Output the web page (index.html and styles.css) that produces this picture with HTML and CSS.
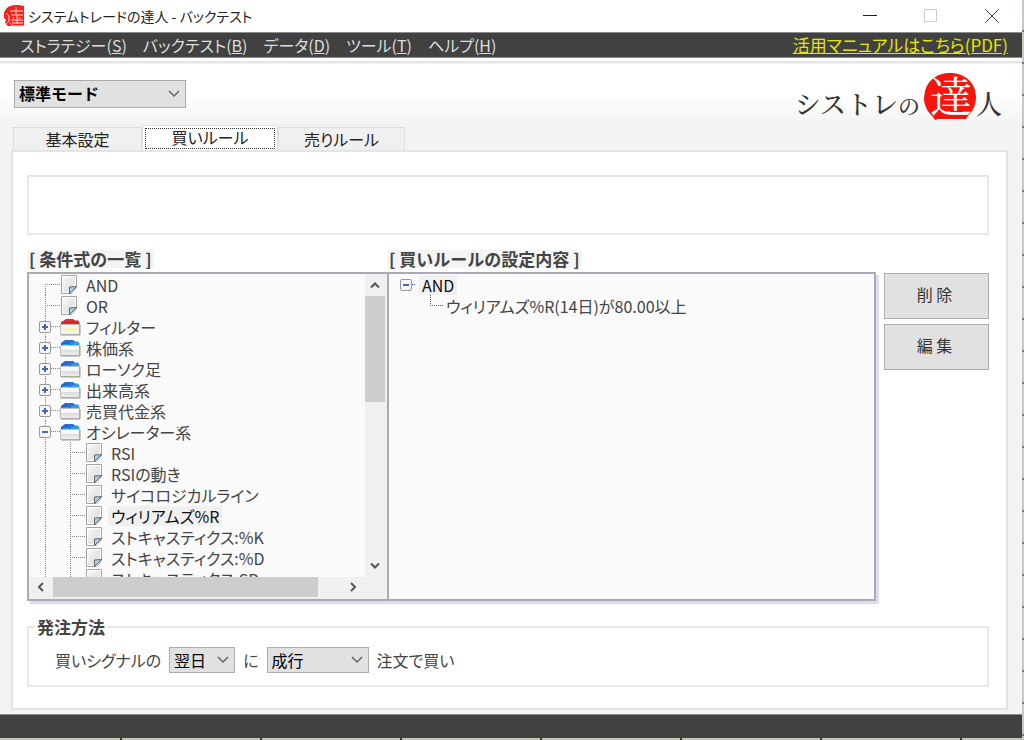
FILE: index.html
```html
<!DOCTYPE html>
<html lang="ja">
<head>
<meta charset="utf-8">
<title>システムトレードの達人 - バックテスト</title>
<link rel="stylesheet" href="styles.css">
</head>
<body>
<svg class="sprites" aria-hidden="true">
  <defs>
    <linearGradient id="paper" x1="0" y1="0" x2="1" y2="1"><stop offset="0" stop-color="#f8f8f8"/><stop offset=".6" stop-color="#e4e4e4"/><stop offset="1" stop-color="#fafafa"/></linearGradient>
    <linearGradient id="blue" x1="0" y1="0" x2="1" y2="0"><stop offset="0" stop-color="#1f63cf"/><stop offset=".65" stop-color="#2c74da"/><stop offset="1" stop-color="#45b4d4"/></linearGradient>
    <linearGradient id="front" x1="0" y1="0" x2="0" y2="1"><stop offset="0" stop-color="#fdfdfd"/><stop offset=".45" stop-color="#f4f4f4"/><stop offset=".5" stop-color="#dedede"/><stop offset="1" stop-color="#efefef"/></linearGradient>
  </defs>
  <symbol id="file" viewBox="0 0 21 21">
    <path d="M1.500 1.500h15v12l-5 6h-10z" fill="#fff" stroke="#a4a4a4"/>
    <path d="M3 3h12v10l-4 5H3z" fill="url(#paper)"/>
    <path d="M16.500 12.500l-7 7v-6.500z" fill="#a9d0f0" stroke="#666"/>
  </symbol>
  <symbol id="folder" viewBox="0 0 21 21">
    <path d="M1 9V6l2-1.500L5 3h8l2 1.500h3L19.500 6v3z" fill="url(#blue)"/>
    <path d="M3 7h6v1H3zM11 6h8v2h-8z" fill="#2fa3cf"/>
    <path d="M.5 8.500h19v10h-19z" fill="url(#front)" stroke="#bdbdbd"/>
    <path d="M1 19h19V9" fill="none" stroke="#999"/>
  </symbol>
  <symbol id="folder-red" viewBox="0 0 21 21">
    <path d="M1 9V6l3-1.500L6 3h7l2 1.500h3L19.500 6v3z" fill="#d42a28"/>
    <path d="M.5 8.500h19v10h-19z" fill="#f3f3f3" stroke="#bdbdbd"/>
    <path d="M3 12h14v2.500H3z" fill="#f6f2a8"/>
    <path d="M1 19h19V9" fill="none" stroke="#999"/>
  </symbol>
</svg>

<div class="window">
  <header class="titlebar">
    <svg class="app-icon" viewBox="0 0 20 22" aria-hidden="true">
      <path d="M5 1.500Q12-1 20 1v20H4l-3-3 1-3-2-2V8q1-4 5-6.500z" fill="#f5211c"/>
      <path d="M6 6h13M12 2v7M7 10h12M9 12l1 2M16 12l-1 2M7 15h12M8 18h11M13 10v9M2 8l3 3v5l-3 3M5 17l4 4h11" fill="none" stroke="#ffdcd8" stroke-width="1"/>
    </svg>
    <h1 class="title">システムトレードの達人 - バックテスト</h1>
    <div class="window-buttons">
      <button aria-label="最小化"><svg viewBox="0 0 16 16"><path d="M1 7.500h14" stroke="#222"/></svg></button>
      <button aria-label="最大化" disabled><svg viewBox="0 0 16 16"><path d="M1.500 1.500h12v12h-12z" stroke="#ccc"/></svg></button>
      <button aria-label="閉じる"><svg viewBox="0 0 16 16"><path d="M1.500 1.500l13 13M14.500 1.500l-13 13" stroke="#333"/></svg></button>
    </div>
  </header>

  <nav class="menubar">
    <button>ストラテジー(<u>S</u>)</button>
    <button>バックテスト(<u>B</u>)</button>
    <button>データ(<u>D</u>)</button>
    <button>ツール(<u>T</u>)</button>
    <button>ヘルプ(<u>H</u>)</button>
    <a class="manual" href="#manual">活用マニュアルはこちら(PDF)</a>
  </nav>

  <main class="main">
    <div class="top">
      <select class="select mode" aria-label="モード"><option>標準モード</option></select>
      <div class="logo">
        <span class="logo-text">シストレ<small>の</small></span>
        <svg class="stamp" viewBox="0 0 52 48" role="img" aria-label="達">
          <path d="M26 1C41 1 52 11 52 25c0 9-4 15-9 20l-1 2H14l-3 1-2-3C4 40 0 34 0 26l1-7C4 8 13 1 26 1z" fill="#f5150c"/>
          <text x="27" y="40" text-anchor="middle" class="stamp-text">達</text>
        </svg>
        <span class="logo-text">人</span>
      </div>
    </div>

    <div class="tabs" role="tablist">
      <button class="tab" role="tab">基本設定</button>
      <button class="tab active" role="tab" aria-selected="true"><span>買いルール</span></button>
      <button class="tab" role="tab">売りルール</button>
    </div>

    <section class="panel">
      <div class="message"></div>

      <div class="rules">
        <div class="columns">
          <div class="headings">
            <h2>[ 条件式の一覧 ]</h2>
            <h2>[ 買いルールの設定内容 ]</h2>
          </div>
          <div class="panes">
            <div class="pane list">
              <ul class="tree">
                <li class="row"><span class="guide first"></span><svg><use href="#file"/></svg><span class="label">AND</span></li>
                <li class="row"><span class="guide"></span><svg><use href="#file"/></svg><span class="label">OR</span></li>
                <li class="row"><span class="guide"><button class="toggle plus" aria-label="開く"></button></span><svg><use href="#folder-red"/></svg><span class="label">フィルター</span></li>
                <li class="row"><span class="guide"><button class="toggle plus" aria-label="開く"></button></span><svg><use href="#folder"/></svg><span class="label">株価系</span></li>
                <li class="row"><span class="guide"><button class="toggle plus" aria-label="開く"></button></span><svg><use href="#folder"/></svg><span class="label">ローソク足</span></li>
                <li class="row"><span class="guide"><button class="toggle plus" aria-label="開く"></button></span><svg><use href="#folder"/></svg><span class="label">出来高系</span></li>
                <li class="row"><span class="guide"><button class="toggle plus" aria-label="開く"></button></span><svg><use href="#folder"/></svg><span class="label">売買代金系</span></li>
                <li class="row"><span class="guide"><button class="toggle" aria-label="閉じる"></button></span><svg><use href="#folder"/></svg><span class="label">オシレーター系</span></li>
                <li class="row"><span class="guide through"></span><span class="guide"></span><svg><use href="#file"/></svg><span class="label">RSI</span></li>
                <li class="row"><span class="guide through"></span><span class="guide"></span><svg><use href="#file"/></svg><span class="label">RSIの動き</span></li>
                <li class="row"><span class="guide through"></span><span class="guide"></span><svg><use href="#file"/></svg><span class="label">サイコロジカルライン</span></li>
                <li class="row"><span class="guide through"></span><span class="guide"></span><svg><use href="#file"/></svg><span class="label selected">ウィリアムズ%R</span></li>
                <li class="row"><span class="guide through"></span><span class="guide"></span><svg><use href="#file"/></svg><span class="label">ストキャスティクス:%K</span></li>
                <li class="row"><span class="guide through"></span><span class="guide"></span><svg><use href="#file"/></svg><span class="label">ストキャスティクス:%D</span></li>
                <li class="row"><span class="guide through"></span><span class="guide"></span><svg><use href="#file"/></svg><span class="label">ストキャスティクス:SD</span></li>
              </ul>
              <div class="vbar">
                <button aria-label="上へ"><svg viewBox="0 0 10 10"><path d="M1 7.500l4-4 4 4"/></svg></button>
                <div class="track"><div class="thumb"></div></div>
                <button aria-label="下へ"><svg viewBox="0 0 10 10"><path d="M1 2.500l4 4 4-4"/></svg></button>
              </div>
              <div class="hbar">
                <button aria-label="左へ"><svg viewBox="0 0 10 10"><path d="M7 1L3 5l4 4"/></svg></button>
                <div class="track"><div class="thumb"></div></div>
                <button aria-label="右へ"><svg viewBox="0 0 10 10"><path d="M3 1l4 4-4 4"/></svg></button>
              </div>
            </div>
            <div class="pane">
              <ul class="tree setting">
                <li class="row"><span class="guide root"><button class="toggle" aria-label="閉じる"></button></span><span class="label selected">AND</span></li>
                <li class="row child"><span class="guide last"></span><span class="label">ウィリアムズ%R(14日)が80.00以上</span></li>
              </ul>
            </div>
          </div>
        </div>
        <div class="actions">
          <button class="action">削 除</button>
          <button class="action">編 集</button>
        </div>
      </div>

      <fieldset class="order">
        <legend>発注方法</legend>
        <label for="day">買いシグナルの</label>
        <select class="select" id="day"><option>翌日</option></select>
        <label for="kind">に</label>
        <select class="select kind" id="kind"><option>成行</option></select>
        <span>注文で買い</span>
      </fieldset>
    </section>
  </main>

  <footer class="statusbar"></footer>
</div>
</body>
</html>
```
FILE: styles.css
```css
* { box-sizing: border-box; }

body {
  margin: 0;
  height: 100vh;
  padding: 0 2px 2px 0;
  background:
    repeating-linear-gradient(to right, transparent 0 120px, #333 120px 122px, transparent 122px 140px) left bottom / 100% 2px no-repeat,
    repeating-linear-gradient(to bottom, #c9c9bd 0 30px, #777 30px 32px) right top / 2px 100% no-repeat,
    #c6c6b8;
  color: #444;
  font: 16px/20px "Noto Sans CJK JP", sans-serif;
  font-feature-settings: "palt";
}

button, select {
  font: inherit;
  font-feature-settings: inherit;
  color: inherit;
}

button {
  border: 0;
  padding: 0;
  background: none;
}

h1, h2, ul { margin: 0; padding: 0; font-size: 16px; }
ul { list-style: none; }

.sprites { position: absolute; width: 0; height: 0; }

.window {
  display: flex;
  flex-direction: column;
  height: 100%;
}

.titlebar {
  display: flex;
  align-items: center;
  height: 32px;
  padding-left: 4px;
  background: #fff;
  color: #222;
}
.app-icon { width: 20px; height: 22px; }
.title { margin-left: 4px; font-size: 14px; font-weight: 400; }
.window-buttons { display: flex; margin-left: auto; }
.window-buttons button { display: grid; place-items: center; width: 61px; height: 32px; }
.window-buttons svg { width: 16px; height: 16px; fill: none; }

.menubar {
  display: flex;
  align-items: center;
  gap: 16px;
  height: 26px;
  padding: 0 14px 0 20px;
  border-top: 1px solid #8c8c8c;
  border-bottom: 1px solid #8c8c8c;
  background: #414141;
  color: #ddd;
}
.manual { margin-left: auto; color: #e6e600; font-size: 17px; }

.main {
  flex: 1;
  min-height: 0;
  display: flex;
  flex-direction: column;
  padding: 0 14px 4px 11px;
  background: linear-gradient(#fff 0 3px, #e5e5e5 3px 5px, #fff 6px 36px, #f3f3f3 66px);
}

.top {
  display: flex;
  justify-content: space-between;
  align-items: flex-start;
  height: 67px;
  padding: 14px 6px 0 3px;
}

.select {
  appearance: none;
  height: 26px;
  width: 66px;
  padding: 0 4px;
  border: 1px solid #adadad;
  border-radius: 0;
  background: #e1e1e1 url("data:image/svg+xml,%3Csvg xmlns='http://www.w3.org/2000/svg' width='12' height='8'%3E%3Cpath d='M1 1l5 5 5-5' fill='none' stroke='%23666' stroke-width='1.500'/%3E%3C/svg%3E") right 5px center no-repeat;
  color: #000;
}
.mode { width: 172px; height: 28px; margin-top: 8px; padding-bottom: 2px; font-weight: 700; font-feature-settings: normal; }
.kind { width: 102px; }

.logo { display: flex; align-items: flex-start; }
.logo-text {
  padding-top: 17px;
  color: #333;
  font: 500 26px/28px "Noto Serif CJK JP", "Noto Sans CJK JP", serif;
}
.logo-text small { font-size: 22px; }
.stamp { width: 52px; height: 48px; margin: 0 0 0 4px; }
.stamp-text { fill: #fff; font: 42px "Noto Serif CJK JP", "Noto Sans CJK JP", serif; }

.tabs { display: flex; align-items: flex-end; padding-left: 2px; height: 25px; }
.tab {
  width: 129px;
  height: 23px;
  border: 1px solid #dedede;
  border-bottom: 0;
  background: #f0f0f0;
  color: #222;
}
.tab.active {
  width: 136px;
  height: 25px;
  padding: 2px;
  background: #fff;
}
.tab.active span { display: block; height: 21px; line-height: 16px; border: 1px dotted #333; }
.tab:last-child { width: 127px; }

.panel {
  flex: 1;
  min-height: 0;
  display: flex;
  flex-direction: column;
  padding: 23px 17px 21px 14px;
  border: 2px solid #e4e4e4;
  background: #fff;
}

.message { flex: none; height: 60px; border: 2px solid #e8e8e8; }

.rules { flex: 1; min-height: 0; display: flex; gap: 8px; margin-top: 15px; }
.columns { flex: 1; display: flex; flex-direction: column; }
.headings, .panes { display: grid; grid-template-columns: 360px 1fr; }
.headings { justify-items: start; margin-bottom: 4px; }
h2 {
  padding: 0 2px;
  background: #f4f4f4;
  font-size: 17px;
  line-height: 18px;
  font-weight: 700;
  font-feature-settings: normal;
}

.panes {
  flex: 1;
  min-height: 0;
  grid-template-rows: minmax(0, 1fr);
  border: 2px solid #a9aab4;
  background: #fafafa;
  box-shadow: 3px 3px 0 #dcdcf0;
}
.pane { min-width: 0; overflow: hidden; }
.list {
  display: grid;
  grid-template: minmax(0, 1fr) 22px / 1fr 22px;
  border-right: 2px solid #a9aab4;
  background: #f0f0f0;
}

.tree { overflow: hidden; padding-left: 6px; background: #fafafa; }
.row { display: flex; align-items: center; height: 21px; }
.row svg { flex: none; width: 21px; height: 21px; }
.label { padding: 0 3px; margin-left: 2px; white-space: nowrap; line-height: 20px; }
.selected { background: #f0f0f0; color: #111; }

.guide {
  --dot: #888;
  display: flex;
  align-items: center;
  flex: none;
  width: 25px;
  height: 21px;
  background:
    repeating-linear-gradient(to bottom, var(--dot) 0 1px, transparent 1px 2px) 10px 0 / 1px 100% no-repeat,
    repeating-linear-gradient(to right, var(--dot) 0 1px, transparent 1px 2px) 10px 10px / 15px 1px no-repeat;
}
.guide.first { background-position: 10px 10px, 10px 10px; }
.guide.through { background-size: 1px 100%, 0 0; }
.guide.root { --dot: #44f; width: 18px; background-size: 0 0, 8px 1px; }
.guide.last { --dot: #44f; width: 23px; background-size: 1px 11px, 13px 1px; }

.toggle {
  width: 12px;
  height: 12px;
  margin-left: 4px;
  border: 1px solid #999;
  border-radius: 2px;
  background: linear-gradient(#4a66b4 0 0) center / 6px 2px no-repeat, #f6f6f6;
}
.toggle.plus {
  background:
    linear-gradient(#4a66b4 0 0) center / 6px 2px no-repeat,
    linear-gradient(#4a66b4 0 0) center / 2px 6px no-repeat,
    #f6f6f6;
}
.setting { padding-left: 9px; }
.setting .guide.root .toggle { margin-left: 2px; }
.setting .selected { margin-left: 3px; }
.child { padding-left: 22px; }
.child .label { margin-left: 0; }

.vbar, .hbar { display: flex; }
.vbar { flex-direction: column; padding-right: 2px; }
.hbar { padding-bottom: 2px; }
.vbar button { height: 22px; }
.hbar button { width: 24px; }
.vbar svg, .hbar svg {
  display: block;
  width: 10px;
  height: 10px;
  margin: auto;
  fill: none;
  stroke: #555;
  stroke-width: 2;
}
.track { flex: 1; }
.thumb { background: #cdcdcd; }
.vbar .thumb { height: 41%; }
.hbar .thumb { width: 92%; height: 100%; }

.actions { display: flex; flex-direction: column; gap: 5px; width: 105px; padding-top: 23px; }
.action { height: 46px; padding: 0 4px 4px 0; border: 1px solid #adadad; background: #e1e1e1; color: #333; }

.order {
  display: flex;
  align-items: center;
  gap: 8px;
  flex: none;
  height: 69px;
  margin: 17px 0 0;
  padding: 11px 26px 0;
  border: 2px solid #e8e8e8;
}
.order legend { margin-left: -20px; padding: 0 2px; font-size: 17px; line-height: 18px; font-weight: 700; }

.statusbar { flex: none; height: 24px; border-top: 1px solid #8c8c8c; background: #414141; }
```
